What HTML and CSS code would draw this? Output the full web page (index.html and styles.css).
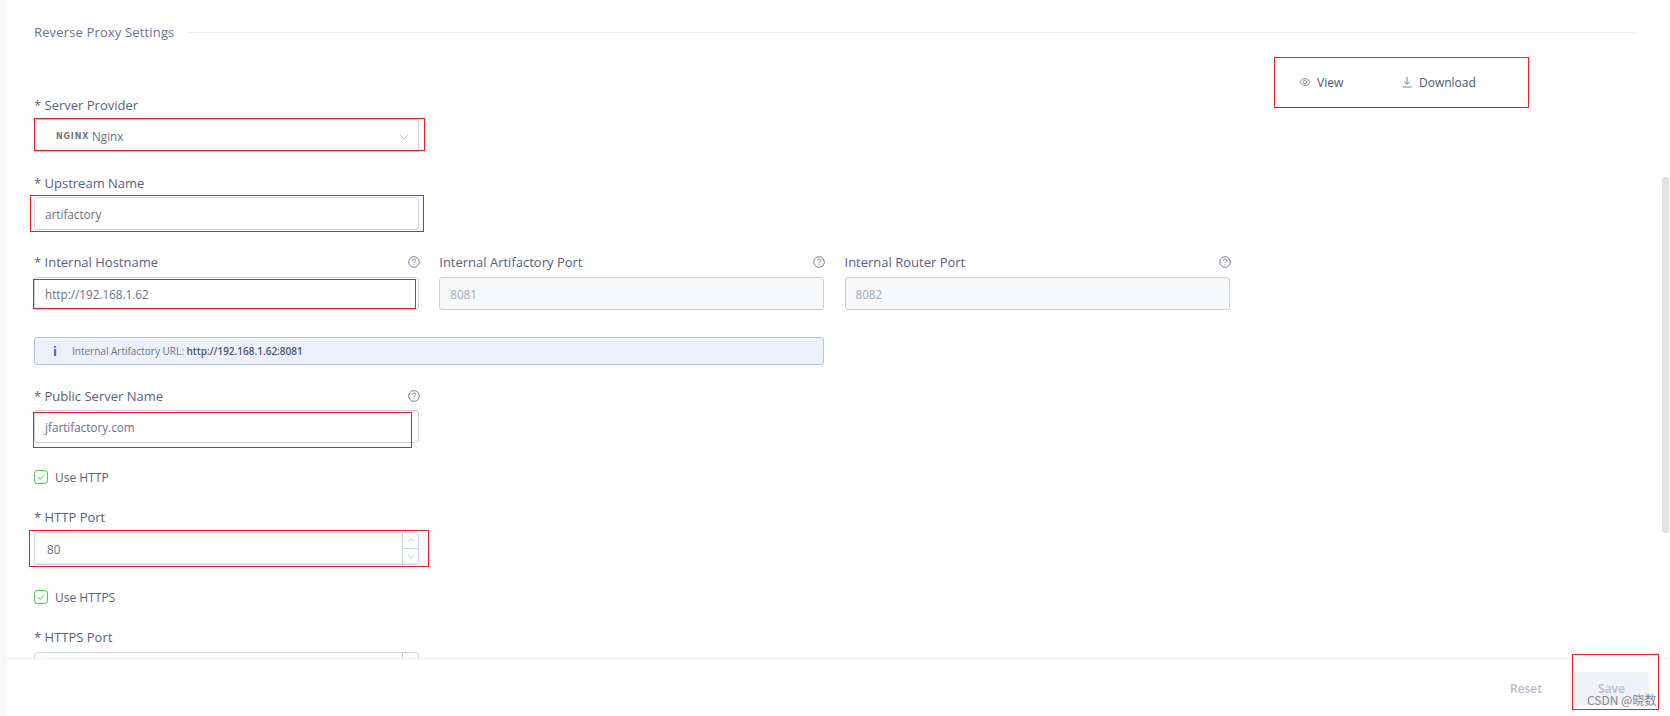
FILE: index.html
```html
<!DOCTYPE html>
<html lang="en">
<head>
    <meta charset="UTF-8">
    <meta name="viewport" content="width=device-width, initial-scale=1.0">
    <title>Reverse Proxy Settings</title>
    <link rel="stylesheet" href="styles.css">
</head>
<body>
    <div class="panel">
        <div class="content">
            <div class="section-title"><span>Reverse Proxy Settings</span><div class="section-line"></div></div>

            <div class="toolbar">
                <a class="tool tool-view">
                    <svg viewBox="0 0 14 12" class="tool-icon"><path d="M1 6c1.600-2.600 3.600-4 6-4s4.400 1.400 6 4c-1.600 2.600-3.600 4-6 4S2.600 8.600 1 6z"/><circle cx="7" cy="6" r="2.200"/></svg>
                    <span>View</span>
                </a>
                <a class="tool tool-download">
                    <svg viewBox="0 0 12 12" class="tool-icon"><path d="M6 1v7M3 5.500 6 8.200 9 5.500M1.500 11h9"/></svg>
                    <span>Download</span>
                </a>
            </div>

            <div class="field field-first">
                <label class="field-label">* Server Provider</label>
                <div class="input select">
                    <span class="nginx-logo">NGINX</span><span>Nginx</span>
                    <svg viewBox="0 0 10 6" class="chevron select-chevron"><path d="M1 1l4 4 4-4"/></svg>
                </div>
            </div>

            <div class="field">
                <label class="field-label">* Upstream Name</label>
                <div class="input">artifactory</div>
            </div>

            <div class="field-row">
                <div class="field">
                    <label class="field-label">* Internal Hostname
                        <svg viewBox="0 0 12 12" class="help"><circle cx="6" cy="6" r="5.300"/><path d="M4.300 4.700c0-1 .8-1.600 1.700-1.600s1.700.6 1.700 1.500c0 1.300-1.700 1.300-1.700 2.600M6 8.300v.9"/></svg>
                    </label>
                    <div class="input">http://192.168.1.62</div>
                </div>
                <div class="field">
                    <label class="field-label">Internal Artifactory Port
                        <svg viewBox="0 0 12 12" class="help"><circle cx="6" cy="6" r="5.300"/><path d="M4.300 4.700c0-1 .8-1.600 1.700-1.600s1.700.6 1.700 1.500c0 1.300-1.700 1.300-1.700 2.600M6 8.300v.9"/></svg>
                    </label>
                    <div class="input input-disabled">8081</div>
                </div>
                <div class="field">
                    <label class="field-label">Internal Router Port
                        <svg viewBox="0 0 12 12" class="help"><circle cx="6" cy="6" r="5.300"/><path d="M4.300 4.700c0-1 .8-1.600 1.700-1.600s1.700.6 1.700 1.500c0 1.300-1.700 1.300-1.700 2.600M6 8.300v.9"/></svg>
                    </label>
                    <div class="input input-disabled">8082</div>
                </div>
            </div>

            <div class="alert">
                <span class="alert-icon">i</span>
                <span>Internal Artifactory URL: <strong>http://192.168.1.62:8081</strong></span>
            </div>

            <div class="field">
                <label class="field-label">* Public Server Name
                    <svg viewBox="0 0 12 12" class="help"><circle cx="6" cy="6" r="5.300"/><path d="M4.300 4.700c0-1 .8-1.600 1.700-1.600s1.700.6 1.700 1.500c0 1.300-1.700 1.300-1.700 2.600M6 8.300v.9"/></svg>
                </label>
                <div class="input">jfartifactory.com</div>
            </div>

            <div class="check">
                <svg viewBox="0 0 14 14" class="check-box"><rect x=".6" y=".6" width="12.800" height="12.800" rx="2.500"/><path d="M4 7.200l2.200 2.200L10 5.300"/></svg>
                <span>Use HTTP</span>
            </div>

            <div class="field field-port">
                <label class="field-label">* HTTP Port</label>
                <div class="input input-number">
                    <span>80</span>
                    <div class="spinner">
                        <div class="spin"><svg viewBox="0 0 10 6" class="chevron"><path d="M1 5l4-4 4 4"/></svg></div>
                        <div class="spin spin-down"><svg viewBox="0 0 10 6" class="chevron"><path d="M1 1l4 4 4-4"/></svg></div>
                    </div>
                </div>
            </div>

            <div class="check check-https">
                <svg viewBox="0 0 14 14" class="check-box"><rect x=".6" y=".6" width="12.800" height="12.800" rx="2.500"/><path d="M4 7.200l2.200 2.200L10 5.300"/></svg>
                <span>Use HTTPS</span>
            </div>

            <div class="field field-port">
                <label class="field-label">* HTTPS Port</label>
                <div class="input input-number">
                    <div class="spinner">
                        <div class="spin"><svg viewBox="0 0 10 6" class="chevron"><path d="M1 5l4-4 4 4"/></svg></div>
                        <div class="spin spin-down"><svg viewBox="0 0 10 6" class="chevron"><path d="M1 1l4 4 4-4"/></svg></div>
                    </div>
                </div>
            </div>
        </div>

        <div class="footer">
            <button class="btn-reset">Reset</button>
            <button class="btn-save">Save</button>
        </div>

        <div class="scroll-thumb"></div>
    </div>

    <!-- Red annotation boxes drawn over the screenshot -->
    <div class="mark mark-view"></div>
    <div class="mark mark-provider"></div>
    <div class="mark mark-upstream"></div>
    <div class="mark mark-hostname"></div>
    <div class="mark mark-public"></div>
    <div class="mark mark-port"></div>
    <div class="mark mark-save"></div>

    <div class="watermark">CSDN @晓数</div>
</body>
</html>
```

FILE: styles.css
```css
* {
    margin: 0;
    padding: 0;
    box-sizing: border-box;
}

html, body {
    height: 100%;
    overflow: hidden;
}

body {
    position: relative;
    background: #fafafa;
    color: #5b6484;
    font-family: 'Open Sans', 'Noto Sans CJK SC', sans-serif;
    font-size: 13px;
    padding-left: 7px;
    padding-right: 1px;
}

.panel {
    position: relative;
    height: 716px;
    background: #fff;
    display: flex;
    flex-direction: column;
}

.content {
    flex: 1;
    min-height: 0;
    overflow: hidden;
    padding: 23px 0 0 27px;
}

.section-title {
    display: flex;
    align-items: center;
    gap: 13px;
    width: 1602px;
    height: 18px;
    line-height: 18px;
    letter-spacing: 0.15px;
    color: #6b7390;
}

.section-line {
    flex: 1;
    height: 1px;
    background: #eef0f6;
}

.toolbar {
    display: flex;
    margin-top: 31px;
    margin-left: 1265px;
    height: 20px;
    width: 230px;
}

.tool {
    display: flex;
    align-items: center;
    gap: 6px;
    font-size: 12px;
    font-weight: 500;
    color: #4a5578;
}

.tool-view {
    width: 102px;
}

.tool-icon {
    width: 12px;
    height: 12px;
    fill: none;
    stroke: #7a7f98;
    stroke-width: 1;
}

.field {
    margin-top: 22px;
    width: 385px;
}

.field-first {
    margin-top: 4px;
}

.field-port {
    margin-top: 24px;
}

.field-port .field-label {
    margin-bottom: 6px;
}

.field-label {
    display: flex;
    align-items: center;
    justify-content: space-between;
    height: 18px;
    line-height: 18px;
    margin-bottom: 5px;
    font-size: 13px;
    font-weight: 500;
    color: #59617f;
}

.help {
    width: 12px;
    height: 12px;
    fill: none;
    stroke: #7d8297;
    stroke-width: 1;
    margin-right: -1px;
    flex-shrink: 0;
}

.input {
    display: flex;
    align-items: center;
    height: 33px;
    padding: 1px 10px 0;
    border: 1px solid #c9d0e3;
    border-radius: 3px;
    background: #fff;
    color: #6a7088;
    font-size: 11.7px;
}

.input-disabled {
    background: #f8f9fb;
    color: #a4a9b8;
}

.select {
    position: relative;
    padding-left: 21px;
    gap: 2px;
}

.nginx-logo {
    font-family: 'DejaVu Sans', sans-serif;
    font-size: 8px;
    font-weight: 700;
    letter-spacing: 0.8px;
    color: #77797e;
    width: 34px;
    white-space: nowrap;
}

.chevron {
    width: 10px;
    height: 6px;
    fill: none;
    stroke: #b9bfce;
    stroke-width: 1;
}

.select-chevron {
    position: absolute;
    right: 9px;
    top: 14px;
}

.field-row {
    display: grid;
    grid-template-columns: repeat(3, 385px);
    column-gap: 20.250px;
    width: 1196px;
}

.field-row .field {
    margin-top: 23px;
}

.field-row .field-label {
    margin-bottom: 6px;
}

.alert {
    display: flex;
    align-items: center;
    width: 790px;
    height: 28px;
    margin-top: 27px;
    padding-left: 17px;
    gap: 14px;
    background: #eef0fb;
    border: 1px solid #b7c3ea;
    border-radius: 3px;
    font-size: 10px;
    color: #6d7389;
}

.alert strong {
    font-weight: 600;
    color: #4f556b;
}

.alert-icon {
    width: 6px;
    text-align: center;
    font-size: 13px;
    font-weight: 700;
    color: #4a55d8;
}

.check {
    display: flex;
    align-items: center;
    gap: 7px;
    margin-top: 27px;
    height: 14px;
    font-size: 12px;
    font-weight: 500;
    color: #59617f;
}

.check-https {
    margin-top: 25px;
}

.check-box {
    width: 14px;
    height: 14px;
    fill: none;
    stroke: #3fc04f;
    stroke-width: 1;
}

.input-number {
    position: relative;
    padding-left: 12px;
}

.spinner {
    position: absolute;
    top: 0;
    right: 0;
    bottom: 0;
    width: 16px;
    border-left: 1px solid #c9d0e3;
    display: flex;
    flex-direction: column;
}

.spin {
    flex: 1;
    display: flex;
    align-items: center;
    justify-content: center;
}

.spin .chevron {
    width: 8px;
    height: 5px;
}

.spin-down {
    border-top: 1px solid #c9d0e3;
}

.footer {
    height: 58px;
    border-top: 1px solid #eff0f6;
    background: #fff;
    display: flex;
    justify-content: flex-end;
    gap: 32px;
    padding: 13px 20px 0 0;
}

.footer button {
    font-family: inherit;
    font-size: 12px;
    font-weight: 600;
    border: none;
    color: #b6bbc9;
    background: none;
    height: 33px;
}

.footer .btn-save {
    width: 75px;
    background: #f0f1f7;
    border-radius: 3px;
}

.scroll-thumb {
    position: absolute;
    top: 177px;
    right: 0;
    width: 7px;
    height: 356px;
    background: #e2e2e2;
    border-radius: 3px;
}

.mark {
    position: absolute;
    border: 1px solid #ec1c24;
}

.mark-view { left: 1274px; top: 57px; width: 255px; height: 51px; }
.mark-provider { left: 34px; top: 118px; width: 391px; height: 33px; }
.mark-upstream { left: 30px; top: 195px; width: 394px; height: 37px; }
.mark-hostname { left: 33px; top: 279px; width: 383px; height: 30px; }
.mark-public { left: 33px; top: 412px; width: 379px; height: 36px; }
.mark-port { left: 29px; top: 530px; width: 400px; height: 37px; }
.mark-save { left: 1572px; top: 654px; width: 87px; height: 56px; }

.watermark {
    position: absolute;
    left: 1587px;
    top: 693px;
    font-family: 'Noto Sans CJK SC', sans-serif;
    font-size: 12px;
    line-height: 14px;
    color: #858585;
    white-space: nowrap;
}
```
